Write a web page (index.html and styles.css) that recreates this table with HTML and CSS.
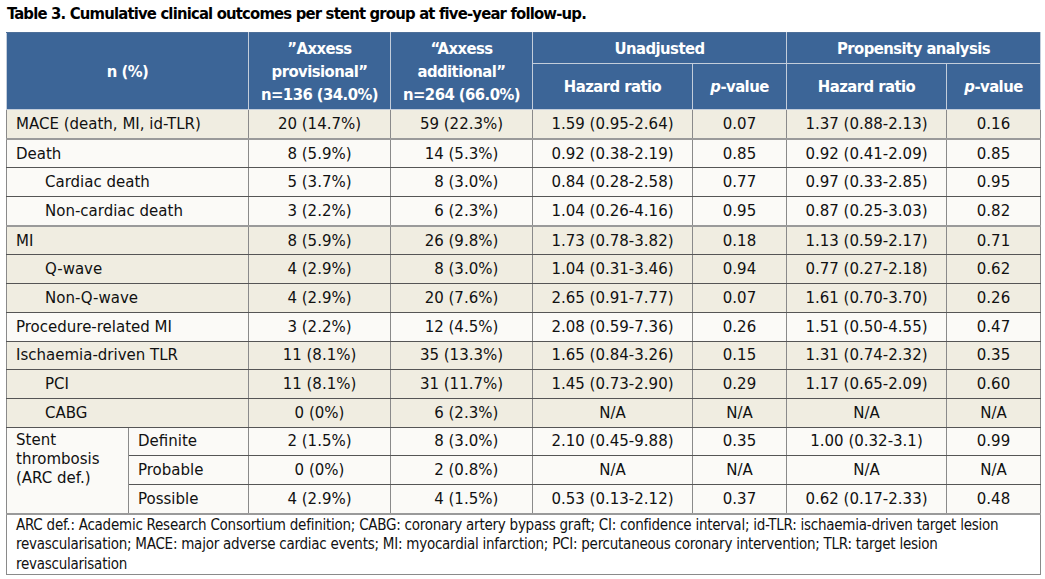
FILE: index.html
```html
<!DOCTYPE html>
<html lang="en">
<head>
<meta charset="utf-8">
<title>Table 3</title>
<link rel="stylesheet" href="styles.css">
</head>
<body>
<div class="page">
  <h1 class="title">Table 3. Cumulative clinical outcomes per stent group at five-year follow-up.</h1>
  <table class="outcomes">
    <colgroup>
      <col class="c-a"><col class="c-b"><col class="c-n"><col class="c-n">
      <col class="c-hr"><col class="c-p"><col class="c-hr"><col class="c-p">
    </colgroup>
    <thead>
      <tr class="h1">
        <th rowspan="2" colspan="2">n (%)</th>
        <th rowspan="2">”Axxess<br>provisional”<br>n=136 (34.0%)</th>
        <th rowspan="2">“Axxess<br>additional”<br>n=264 (66.0%)</th>
        <th colspan="2">Unadjusted</th>
        <th colspan="2">Propensity analysis</th>
      </tr>
      <tr class="h2">
        <th>Hazard ratio</th>
        <th><i>p</i>-value</th>
        <th>Hazard ratio</th>
        <th><i>p</i>-value</th>
      </tr>
    </thead>
    <tbody>
      <tr class="beige">
        <td colspan="2" class="lbl">MACE (death, MI, id-TLR)</td>
        <td>20 (14.7%)</td><td>59 (22.3%)</td><td>1.59 (0.95-2.64)</td><td>0.07</td><td>1.37 (0.88-2.13)</td><td>0.16</td>
      </tr>
      <tr class="white group">
        <td colspan="2" class="lbl">Death</td>
        <td>8 (5.9%)</td><td>14 (5.3%)</td><td>0.92 (0.38-2.19)</td><td>0.85</td><td>0.92 (0.41-2.09)</td><td>0.85</td>
      </tr>
      <tr class="white">
        <td colspan="2" class="lbl sub">Cardiac death</td>
        <td>5 (3.7%)</td><td>&#8199;8 (3.0%)</td><td>0.84 (0.28-2.58)</td><td>0.77</td><td>0.97 (0.33-2.85)</td><td>0.95</td>
      </tr>
      <tr class="white">
        <td colspan="2" class="lbl sub">Non-cardiac death</td>
        <td>3 (2.2%)</td><td>&#8199;6 (2.3%)</td><td>1.04 (0.26-4.16)</td><td>0.95</td><td>0.87 (0.25-3.03)</td><td>0.82</td>
      </tr>
      <tr class="beige group">
        <td colspan="2" class="lbl">MI</td>
        <td>8 (5.9%)</td><td>26 (9.8%)</td><td>1.73 (0.78-3.82)</td><td>0.18</td><td>1.13 (0.59-2.17)</td><td>0.71</td>
      </tr>
      <tr class="beige">
        <td colspan="2" class="lbl sub">Q-wave</td>
        <td>4 (2.9%)</td><td>&#8199;8 (3.0%)</td><td>1.04 (0.31-3.46)</td><td>0.94</td><td>0.77 (0.27-2.18)</td><td>0.62</td>
      </tr>
      <tr class="beige dark">
        <td colspan="2" class="lbl sub">Non-Q-wave</td>
        <td>4 (2.9%)</td><td>20 (7.6%)</td><td>2.65 (0.91-7.77)</td><td>0.07</td><td>1.61 (0.70-3.70)</td><td>0.26</td>
      </tr>
      <tr class="white">
        <td colspan="2" class="lbl">Procedure-related MI</td>
        <td>3 (2.2%)</td><td>12 (4.5%)</td><td>2.08 (0.59-7.36)</td><td>0.26</td><td>1.51 (0.50-4.55)</td><td>0.47</td>
      </tr>
      <tr class="beige">
        <td colspan="2" class="lbl">Ischaemia-driven TLR</td>
        <td>11 (8.1%)</td><td>35 (13.3%)</td><td>1.65 (0.84-3.26)</td><td>0.15</td><td>1.31 (0.74-2.32)</td><td>0.35</td>
      </tr>
      <tr class="beige">
        <td colspan="2" class="lbl sub">PCI</td>
        <td>11 (8.1%)</td><td>31 (11.7%)</td><td>1.45 (0.73-2.90)</td><td>0.29</td><td>1.17 (0.65-2.09)</td><td>0.60</td>
      </tr>
      <tr class="beige">
        <td colspan="2" class="lbl sub">CABG</td>
        <td>0 (0%)</td><td>&#8199;6 (2.3%)</td><td>N/A</td><td>N/A</td><td>N/A</td><td>N/A</td>
      </tr>
      <tr class="white">
        <td rowspan="3" class="lbl stent">Stent<br>thrombosis<br>(ARC def.)</td>
        <td class="lbl">Definite</td>
        <td>2 (1.5%)</td><td>&#8199;8 (3.0%)</td><td>2.10 (0.45-9.88)</td><td>0.35</td><td>1.00 (0.32-3.1)</td><td>0.99</td>
      </tr>
      <tr class="white">
        <td class="lbl">Probable</td>
        <td>0 (0%)</td><td>&#8199;2 (0.8%)</td><td>N/A</td><td>N/A</td><td>N/A</td><td>N/A</td>
      </tr>
      <tr class="white">
        <td class="lbl">Possible</td>
        <td>4 (2.9%)</td><td>&#8199;4 (1.5%)</td><td>0.53 (0.13-2.12)</td><td>0.37</td><td>0.62 (0.17-2.33)</td><td>0.48</td>
      </tr>
    </tbody>
    <tfoot>
      <tr>
        <td colspan="8" class="note">ARC def.: Academic Research Consortium definition; CABG: coronary artery bypass graft; CI: confidence interval; id-TLR: ischaemia-driven target lesion revascularisation; MACE: major adverse cardiac events; MI: myocardial infarction; PCI: percutaneous coronary intervention; TLR: target lesion revascularisation</td>
      </tr>
    </tfoot>
  </table>
</div>
</body>
</html>
```

FILE: styles.css
```css
html, body {
  margin: 0;
  padding: 0;
  background: #ffffff;
}

.page {
  padding: 0 5px 0 6px;
}

.title {
  margin: 0;
  padding: 4px 0 0 1px;
  height: 28px;
  box-sizing: border-box;
  font-family: "Liberation Sans Narrow", "DejaVu Sans Condensed", "Roboto Condensed", "Liberation Sans", sans-serif;
  font-stretch: condensed;
  font-weight: bold;
  font-size: 16.5px;
  letter-spacing: -0.82px;
  line-height: 20px;
  color: #000;
}

.outcomes {
  border-collapse: collapse;
  table-layout: fixed;
  width: 1034px;
  margin-top: 4px;
}

.c-a { width: 122px; }
.c-b { width: 120px; }
.c-n { width: 142px; }
.c-hr { width: 160px; }
.c-p { width: 94px; }

.outcomes th {
  background: #3c6597;
  color: #ffffff;
  border: 1px solid #c3cddb;
  font-family: "Liberation Sans Narrow", "DejaVu Sans Condensed", "Roboto Condensed", "Liberation Sans", sans-serif;
  font-stretch: condensed;
  font-weight: bold;
  font-size: 16.5px;
  letter-spacing: -0.55px;
  line-height: 23px;
  padding: 0;
  text-align: center;
  vertical-align: middle;
}

.outcomes thead tr:first-child th {
  border-top-color: #4d6f99;
}

.h1 th { height: 30px; }
.h2 th { height: 45px; }

.outcomes td {
  font-family: "DejaVu Sans", "Verdana", sans-serif;
  font-size: 15px;
  color: #111;
  text-align: center;
  vertical-align: middle;
  height: 27.7px;
  padding: 0;
  border: 1px solid #8a8a8a;
  border-top-color: #555;
  border-bottom-color: #555;
  white-space: nowrap;
}

.beige td { background: #f0ede1; }
.white td { background: #fbfaf7; }

.group td { border-top: 2px solid #9a9a9a; }
.dark td { border-top-color: #222; }

.outcomes td.lbl {
  text-align: left;
  padding-left: 9px;
}

.outcomes td.sub {
  padding-left: 38px;
}

.outcomes td.stent {
  vertical-align: top;
  padding-top: 3px;
  line-height: 19px;
  white-space: normal;
}

.outcomes td.note {
  background: #ffffff;
  text-align: left;
  white-space: normal;
  vertical-align: top;
  font-family: "Liberation Sans Narrow", "DejaVu Sans Condensed", "Roboto Condensed", "Liberation Sans", sans-serif;
  font-stretch: condensed;
  font-size: 15px;
  letter-spacing: -0.25px;
  line-height: 19.5px;
  color: #111;
  padding: 1px 9px 0 9px;
  height: 57px;
  border-top: 2px solid #9a9a9a;
  border-bottom: 1px solid #8a8a8a;
}
```
